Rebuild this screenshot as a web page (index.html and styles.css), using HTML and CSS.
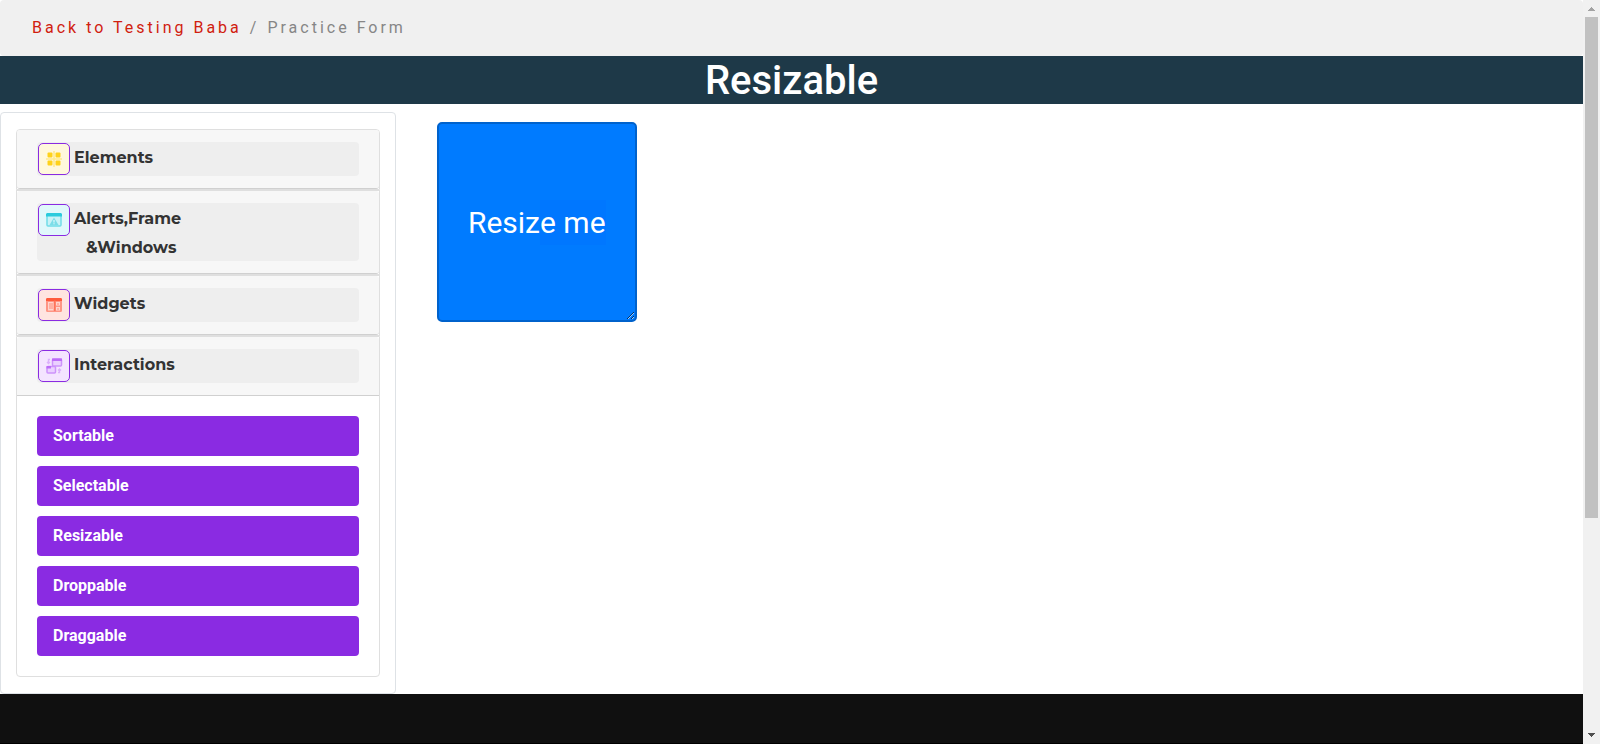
FILE: index.html
```html
<!DOCTYPE html>
<html lang="en">
<head>
<meta charset="utf-8">
<title>Resizable</title>
<link rel="stylesheet" href="styles.css">
</head>
<body>
<div class="page">
  <nav class="breadcrumb" aria-label="Breadcrumb">
    <a class="breadcrumb-link" href="#">Back to Testing Baba</a>
    <span class="breadcrumb-sep">/</span>
    <span>Practice Form</span>
  </nav>
  <h1 class="banner">Resizable</h1>
  <main class="content">
    <aside class="sidebar">
      <div class="card">
        <div class="card-header">
          <button class="toggle" type="button">
            <svg class="icon icon-yellow" viewBox="0 0 30 30" aria-hidden="true">
              <path d="M15 7v16M7 15h16" stroke="#ffe98a" stroke-width="1.500"/>
              <g fill="#ffd21a"><rect x="8.500" y="8.500" width="5" height="5" rx="1"/><rect x="16.500" y="8.500" width="5" height="5" rx="1"/><rect x="8.500" y="16.500" width="5" height="5" rx="1"/><rect x="16.500" y="16.500" width="5" height="5" rx="1"/></g>
            </svg>
            <span class="label">Elements</span>
          </button>
        </div>
      </div>
      <div class="card">
        <div class="card-header">
          <button class="toggle" type="button">
            <svg class="icon icon-cyan" viewBox="0 0 30 30" aria-hidden="true">
              <rect x="8" y="9" width="14" height="12" rx="1" fill="#c9f2f7" stroke="#6fdce8" stroke-width="1.500"/>
              <path d="M8 8h14l1 1v2.500H7V9z" fill="#2bcbdd"/>
              <path d="M15 12.500l4.500 7.500h-9z" fill="#7bdde8"/>
              <path d="M15 15v2.500M15 18.300v1" stroke="#e0f8fb" stroke-width="1.200"/>
            </svg>
            <span class="label">Alerts,Frame<br><span class="indent">&amp;Windows</span></span>
          </button>
        </div>
      </div>
      <div class="card">
        <div class="card-header">
          <button class="toggle" type="button">
            <svg class="icon icon-red" viewBox="0 0 30 30" aria-hidden="true">
              <rect x="7" y="8" width="16" height="14" rx="1.500" fill="#ff9584"/>
              <path d="M8 8h14l1 1v2H7V9z" fill="#ff5a3c"/>
              <path d="M9 12h5.500v8.500H9zM17 12h4v3.500h-4zM17 17h4v3.500h-4z" fill="#ffd5ce"/>
              <path d="M10 14h4M10 16h4M10 18h4M18 14h2M18 19h2" stroke="#ff8a77"/>
              <path d="M15.800 10v11" stroke="#ff6b51" stroke-width="1.200"/>
            </svg>
            <span class="label">Widgets</span>
          </button>
        </div>
      </div>
      <div class="card">
        <div class="card-header card-header-open">
          <button class="toggle" type="button" aria-expanded="true">
            <svg class="icon icon-purple" viewBox="0 0 30 30" aria-hidden="true">
              <g fill="#ead0ff" stroke="#cd92fb" stroke-width="1.500"><rect x="8" y="15.500" width="8.500" height="6.500" rx="1"/><rect x="13.500" y="8" width="9" height="7" rx="1"/></g>
              <path d="M13 7.500h10V10H13zM7.500 15H12v2.500H7.500z" fill="#bd6cf8"/>
              <path d="M11 8.500H9.500V12M8 11l1.500 1.500L11 11M19 21.500h1.500V18M19 19.500l1.500-1.500 1.500 1.500" fill="none" stroke="#dcb0fc" stroke-width="1.400"/>
            </svg>
            <span class="label">Interactions</span>
          </button>
        </div>
        <div class="card-body">
          <button class="item" type="button">Sortable</button>
          <button class="item" type="button">Selectable</button>
          <button class="item" type="button">Resizable</button>
          <button class="item" type="button">Droppable</button>
          <button class="item" type="button">Draggable</button>
        </div>
      </div>
    </aside>
    <section class="stage">
      <div class="resize-box"><p class="resize-text">Resiz<span class="tint">e me</span></p></div>
    </section>
  </main>
  <footer class="footer"></footer>
</div>
<div class="scrollbar" aria-hidden="true">
  <svg class="arrow" viewBox="0 0 17 17" shape-rendering="crispEdges"><path d="M5 11v-1h1V9h1V8h1V7h1v1h1v1h1v1h1v1z" fill="#a3a3a3"/></svg>
  <div class="track"><div class="thumb"></div></div>
  <svg class="arrow" viewBox="0 0 17 17" shape-rendering="crispEdges"><path d="M5 6v1h1v1h1v1h1v1h1V9h1V8h1V7h1V6z" fill="#505050"/></svg>
</div>
</body>
</html>
```
FILE: styles.css
```css
* { box-sizing: border-box; }

body {
  margin: 0;
  display: flex;
  min-height: 100vh;
  background: #fff;
  color: #212529;
  font-family: Roboto, "Liberation Sans", sans-serif;
  font-size: 16px;
  line-height: 24px;
}

button { font: inherit; border: 0; text-align: left; cursor: pointer; }

.page { flex: 1; min-width: 0; display: flex; flex-direction: column; }

.breadcrumb {
  display: flex;
  gap: 8px;
  padding: 16px 32px;
  border-radius: 4px;
  background: #f0f0f0;
  color: #868686;
  letter-spacing: 3px;
}
.breadcrumb-link { color: #d0200e; text-decoration: none; }

.banner {
  margin: 0 0 8px;
  padding-top: 2px;
  background: #1e3948;
  color: #fff;
  font-size: 40px;
  font-weight: 500;
  line-height: 46px;
  text-align: center;
}

.content { display: flex; align-items: flex-start; }

.sidebar {
  width: 25%;
  padding: 16px 15px;
  border: 1px solid #dee2e6;
  border-radius: 4px;
}

.card { border: 1px solid #dfdfdf; }
.card:first-child { border-radius: 4px 4px 0 0; }
.card:last-child { border-radius: 0 0 4px 4px; }
.card-header {
  padding: 12px 20px;
  border-bottom: 1px solid #d0d0d0;
  border-radius: 3px;
  background: #f7f7f7;
}
.card-header-open { border-radius: 3px 3px 0 0; }

.toggle {
  display: flex;
  align-items: flex-start;
  gap: 4px;
  width: 100%;
  padding: 1px;
  border-radius: 4px;
  background: #eee;
  color: #333;
}
.icon {
  flex: none;
  width: 32px;
  height: 32px;
  border: 1px solid #8a2be2;
  border-radius: 5px;
}
.icon-yellow { background: #fff8dc; }
.icon-cyan { background: #e0f8fb; }
.icon-red { background: #ffe4e0; }
.icon-purple { background: #f4e4ff; }

.label {
  margin-bottom: -2px;
  font-family: Montserrat, Inter, sans-serif;
  font-weight: 700;
  line-height: 29px;
}
.indent { padding-left: 12px; }

.card-body { display: flex; flex-direction: column; gap: 10px; padding: 20px; }
.item {
  padding: 8px 16px;
  border-radius: 4px;
  background: #8a2be2;
  color: #fff;
  font-weight: 700;
}

.stage { flex: 1; padding: 10px 41px; }
.resize-box {
  display: flex;
  align-items: center;
  justify-content: center;
  width: 200px;
  height: 200px;
  overflow: hidden;
  resize: both;
  border: 2px solid #0062cc;
  border-radius: 5px;
  background: #007bff;
  color: #fff;
}
.resize-text { margin: 0; font-size: 30px; line-height: 45px; white-space: nowrap; }
.tint { display: inline-block; background: #0077ff; }

.footer { flex: 1; min-height: 50px; background: #101010; border-bottom: 1px solid #000; }

.scrollbar {
  display: flex;
  flex-direction: column;
  width: 17px;
  background: #f1f1f1;
}
.arrow { width: 17px; height: 17px; }
.track { flex: 1; padding: 0 2px; }
.thumb { height: 501px; background: #c1c1c1; }
```
